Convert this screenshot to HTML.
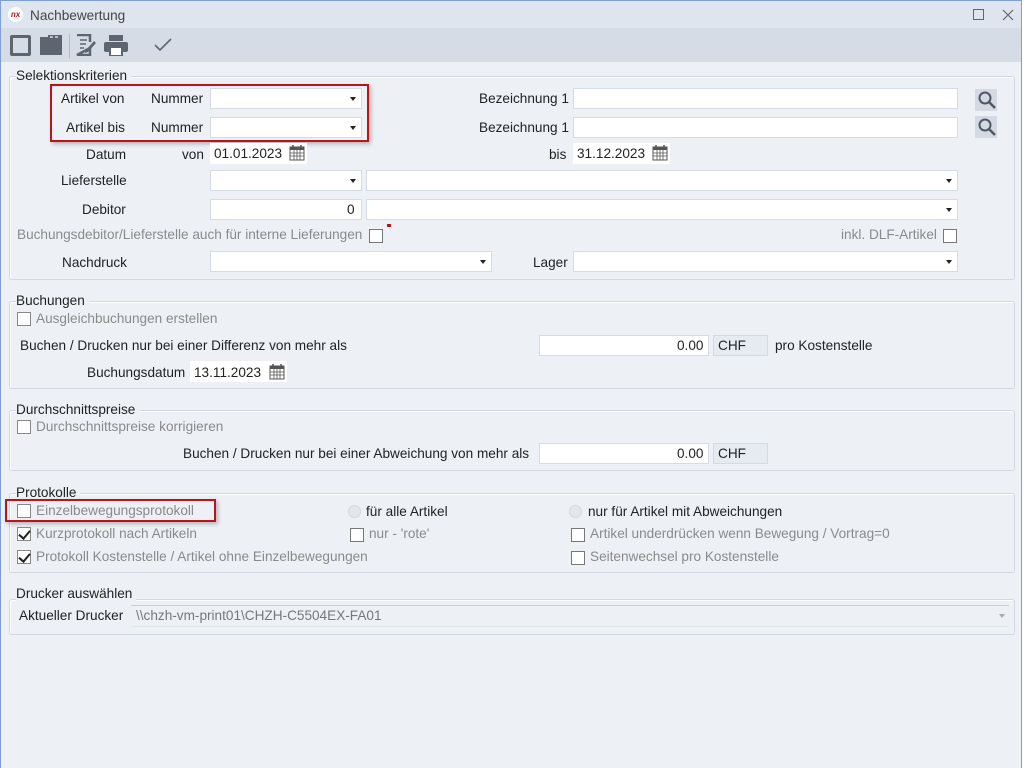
<!DOCTYPE html>
<html><head><meta charset="utf-8"><style>
*{box-sizing:border-box;margin:0;padding:0}
body{width:1024px;height:768px;overflow:hidden;background:#fff;font-family:"Liberation Sans",sans-serif;font-size:13.6px;color:#222;position:relative}
#win{position:absolute;left:0;top:0;width:1022px;height:768px;background:#edf0f5;border-left:1px solid #7f9fd0;border-right:1px solid #7f9fd0;border-top:1px solid #7f9fd0}
.a{position:absolute;white-space:nowrap;line-height:15px}
.g{color:#8a8a8a}
.in{position:absolute;background:#fff;border:1px solid #d5dbe4;height:21px}
.dd:after{content:"";position:absolute;right:5px;top:8px;border-left:3.5px solid transparent;border-right:3.5px solid transparent;border-top:4px solid #222}
.grp{position:absolute;left:8px;right:6px;border:1px solid #d3d8e0;border-radius:3px;box-shadow:inset 1px 1px 0 #fff}
.lg{position:absolute;left:16px;background:#edf0f5;padding-right:4px;line-height:15px}
.cb{position:absolute;width:14px;height:14px;border:1px solid #777;background:#fff}
.ck:after{content:"";position:absolute;left:3px;top:0px;width:5px;height:9px;border:solid #222;border-width:0 2px 2px 0;transform:rotate(40deg)}
.rd{position:absolute;width:13px;height:13px;border-radius:50%;background:#e4e6ea;border:1px solid #d4d7dc}
.red{position:absolute;border:2px solid #b8141b;box-shadow:2px 2px 4px rgba(0,0,0,.25)}
.cal{position:absolute;width:16px;height:17px}
.chf{position:absolute;background:#e6ebf2;border:1px solid #d3dae4;height:21px;padding:2px 0 0 4px;width:55px}
</style></head><body>
<div id="win">
<div style="position:absolute;left:0;top:0;right:0;height:27px;background:#dfe5ee"></div>
<div style="position:absolute;left:7px;top:6px;width:15px;height:15px;border-radius:50%;background:#fff;color:#c0141c;font-size:8px;font-weight:bold;font-style:italic;line-height:15px;text-align:center">nx</div>
<div class="a" style="left:29px;top:7px;color:#444">Nachbewertung</div>
<div style="position:absolute;left:972px;top:8px;width:11px;height:11px;border:1px solid #666"></div>
<svg style="position:absolute;left:1001px;top:8px" width="12" height="12"><path d="M1 1L11 11M11 1L1 11" stroke="#666" stroke-width="1.2"/></svg>
<div style="position:absolute;left:0;top:27px;right:0;height:34px;background:#d5dce6"></div>
<div style="position:absolute;left:9px;top:34px;width:21px;height:21px;border:3px solid #5d6670;border-radius:2px"></div>
<svg style="position:absolute;left:39px;top:34px" width="23" height="20"><path d="M0 2h8v-2h14v20H0z" fill="#5d6670"/><path d="M10 2h3M15 2h3" stroke="#d5dce6" stroke-width="1.5"/></svg>
<div style="position:absolute;left:68px;top:33px;width:1px;height:24px;background:#b5bcc6"></div>
<svg style="position:absolute;left:74px;top:33px" width="22" height="22"><path d="M2 1h13v7M15 14v7H2z" fill="none" stroke="#5d6670" stroke-width="2.5"/><path d="M5 6h7M5 10h6M5 14h4" stroke="#5d6670" stroke-width="1.5"/><path d="M11 16l8-9 2 2-8 9-3 1z" fill="#5d6670"/></svg>
<svg style="position:absolute;left:103px;top:34px" width="24" height="21"><rect x="5" y="0" width="14" height="6" fill="#5d6670"/><rect x="0" y="7" width="24" height="10" rx="2" fill="#5d6670"/><rect x="6" y="12" width="12" height="9" fill="#fff" stroke="#5d6670" stroke-width="2"/></svg>
<svg style="position:absolute;left:153px;top:37px" width="18" height="14"><path d="M1 7l5 5 11-11" fill="none" stroke="#5d6670" stroke-width="1.6"/></svg>

<!-- Selektionskriterien -->
<div class="grp" style="top:75px;height:204px"></div>
<div class="lg" style="top:67px;left:15px">Selektionskriterien</div>
<div class="a" style="left:60px;top:90px">Artikel von</div>
<div class="a" style="left:150px;top:90px">Nummer</div>
<div class="in dd" style="left:209px;top:87px;width:152px"></div>
<div class="a" style="left:65px;top:119px">Artikel bis</div>
<div class="a" style="left:150px;top:119px">Nummer</div>
<div class="in dd" style="left:209px;top:116px;width:152px"></div>
<div class="red" style="left:49px;top:83px;width:319px;height:58px"></div>
<div class="a" style="left:478px;top:90px">Bezeichnung 1</div>
<div class="in" style="left:572px;top:87px;width:385px"></div>
<div class="a" style="left:478px;top:119px">Bezeichnung 1</div>
<div class="in" style="left:572px;top:116px;width:385px"></div>
<div style="position:absolute;left:974px;top:88px;width:22px;height:22px;background:#d5dae2"></div>
<div style="position:absolute;left:974px;top:115px;width:22px;height:22px;background:#d5dae2"></div>
<svg style="position:absolute;left:976px;top:89px" width="20" height="20"><circle cx="8" cy="8" r="5.5" fill="none" stroke="#4d5866" stroke-width="2"/><path d="M12 12l6 6" stroke="#4d5866" stroke-width="2.5"/></svg>
<svg style="position:absolute;left:976px;top:116px" width="20" height="20"><circle cx="8" cy="8" r="5.5" fill="none" stroke="#4d5866" stroke-width="2"/><path d="M12 12l6 6" stroke="#4d5866" stroke-width="2.5"/></svg>
<div class="a" style="left:85px;top:146px">Datum</div>
<div class="a" style="left:181px;top:146px">von</div>
<div class="in" style="left:209px;top:142px;width:97px;border:none"></div>
<div class="a" style="left:213px;top:145px">01.01.2023</div>
<svg class="cal" style="left:288px;top:143px" viewBox="0 0 16 17"><rect x="1" y="3" width="14" height="13" fill="#fff" stroke="#555"/><rect x="1" y="3" width="14" height="3" fill="#555"/><path d="M4 1v4M12 1v4" stroke="#555" stroke-width="1.5"/><path d="M1 9h14M1 12h14M5 6v10M8 6v10M11 6v10" stroke="#555" stroke-width=".8"/></svg>
<div class="a" style="left:548px;top:146px">bis</div>
<div class="in" style="left:572px;top:142px;width:97px;border:none"></div>
<div class="a" style="left:576px;top:145px">31.12.2023</div>
<svg class="cal" style="left:651px;top:143px" viewBox="0 0 16 17"><rect x="1" y="3" width="14" height="13" fill="#fff" stroke="#555"/><rect x="1" y="3" width="14" height="3" fill="#555"/><path d="M4 1v4M12 1v4" stroke="#555" stroke-width="1.5"/><path d="M1 9h14M1 12h14M5 6v10M8 6v10M11 6v10" stroke="#555" stroke-width=".8"/></svg>
<div class="a" style="left:60px;top:172px">Lieferstelle</div>
<div class="in dd" style="left:209px;top:169px;width:152px"></div>
<div class="in dd" style="left:365px;top:169px;width:592px"></div>
<div class="a" style="left:81px;top:201px">Debitor</div>
<div class="in" style="left:209px;top:198px;width:152px"></div>
<div class="a" style="left:346px;top:201px">0</div>
<div class="in dd" style="left:365px;top:198px;width:592px"></div>
<div class="a g" style="left:16px;top:226px">Buchungsdebitor/Lieferstelle auch für interne Lieferungen</div>
<div class="cb" style="left:368px;top:228px"></div>
<div style="position:absolute;left:386px;top:223px;width:4px;height:3px;background:#c0141c"></div>
<div class="a g" style="left:840px;top:226px">inkl. DLF-Artikel</div>
<div class="cb" style="left:942px;top:228px"></div>
<div class="a" style="left:61px;top:254px">Nachdruck</div>
<div class="in dd" style="left:209px;top:250px;width:282px"></div>
<div class="a" style="left:532px;top:254px">Lager</div>
<div class="in dd" style="left:572px;top:250px;width:385px"></div>

<!-- Buchungen -->
<div class="grp" style="top:300px;height:88px"></div>
<div class="lg" style="top:292px;left:15px">Buchungen</div>
<div class="cb" style="left:16px;top:311px;border-color:#888"></div>
<div class="a g" style="left:35px;top:310px">Ausgleichbuchungen erstellen</div>
<div class="a" style="left:19px;top:337px">Buchen / Drucken nur bei einer Differenz von mehr als</div>
<div class="in" style="left:538px;top:334px;width:170px"></div>
<div class="a" style="left:676px;top:337px">0.00</div>
<div class="chf" style="left:712px;top:334px">CHF</div>
<div class="a" style="left:774px;top:337px">pro Kostenstelle</div>
<div class="a" style="left:86px;top:364px">Buchungsdatum</div>
<div class="in" style="left:189px;top:360px;width:97px;border:none"></div>
<div class="a" style="left:193px;top:364px">13.11.2023</div>
<svg class="cal" style="left:268px;top:362px" viewBox="0 0 16 17"><rect x="1" y="3" width="14" height="13" fill="#fff" stroke="#555"/><rect x="1" y="3" width="14" height="3" fill="#555"/><path d="M4 1v4M12 1v4" stroke="#555" stroke-width="1.5"/><path d="M1 9h14M1 12h14M5 6v10M8 6v10M11 6v10" stroke="#555" stroke-width=".8"/></svg>

<!-- Durchschnittspreise -->
<div class="grp" style="top:409px;height:61px"></div>
<div class="lg" style="top:401px;left:15px">Durchschnittspreise</div>
<div class="cb" style="left:16px;top:419px;border-color:#888"></div>
<div class="a g" style="left:35px;top:418px">Durchschnittspreise korrigieren</div>
<div class="a" style="left:182px;top:445px">Buchen / Drucken nur bei einer Abweichung von mehr als</div>
<div class="in" style="left:538px;top:442px;width:170px"></div>
<div class="a" style="left:676px;top:445px">0.00</div>
<div class="chf" style="left:712px;top:442px">CHF</div>

<!-- Protokolle -->
<div class="grp" style="top:492px;height:80px"></div>
<div class="lg" style="top:484px;left:15px">Protokolle</div>
<div class="cb" style="left:16px;top:503px;border-color:#888"></div>
<div class="a g" style="left:35px;top:502px">Einzelbewegungsprotokoll</div>
<div class="red" style="left:4px;top:498px;width:211px;height:23px"></div>
<div class="cb ck" style="left:16px;top:526px;border-color:#888"></div>
<div class="a g" style="left:35px;top:525px">Kurzprotokoll nach Artikeln</div>
<div class="cb ck" style="left:16px;top:549px;border-color:#888"></div>
<div class="a g" style="left:35px;top:548px">Protokoll Kostenstelle / Artikel ohne Einzelbewegungen</div>
<div class="rd" style="left:347px;top:504px"></div>
<div class="a" style="left:365px;top:503px">für alle Artikel</div>
<div class="cb" style="left:349px;top:527px"></div>
<div class="a g" style="left:368px;top:525px">nur - 'rote'</div>
<div class="rd" style="left:568px;top:504px"></div>
<div class="a" style="left:587px;top:503px">nur für Artikel mit Abweichungen</div>
<div class="cb" style="left:570px;top:527px"></div>
<div class="a g" style="left:589px;top:525px">Artikel underdrücken wenn Bewegung / Vortrag=0</div>
<div class="cb" style="left:570px;top:550px"></div>
<div class="a g" style="left:589px;top:548px">Seitenwechsel pro Kostenstelle</div>

<!-- Drucker -->
<div class="grp" style="top:598px;height:36px"></div>
<div class="lg" style="top:585px;left:15px">Drucker auswählen</div>
<div class="a" style="left:18px;top:607px">Aktueller Drucker</div>
<div style="position:absolute;left:130px;top:604px;width:878px;height:22px;border-top:1px solid #c8cdd4;border-bottom:1px solid #dfe9e0;background:#edf0f5"></div>
<div class="a" style="left:135px;top:607px;color:#777">\\chzh-vm-print01\CHZH-C5504EX-FA01</div>
<div style="position:absolute;left:998px;top:613px;border-left:3.5px solid transparent;border-right:3.5px solid transparent;border-top:4px solid #aaa"></div>
</div>
</body></html>
